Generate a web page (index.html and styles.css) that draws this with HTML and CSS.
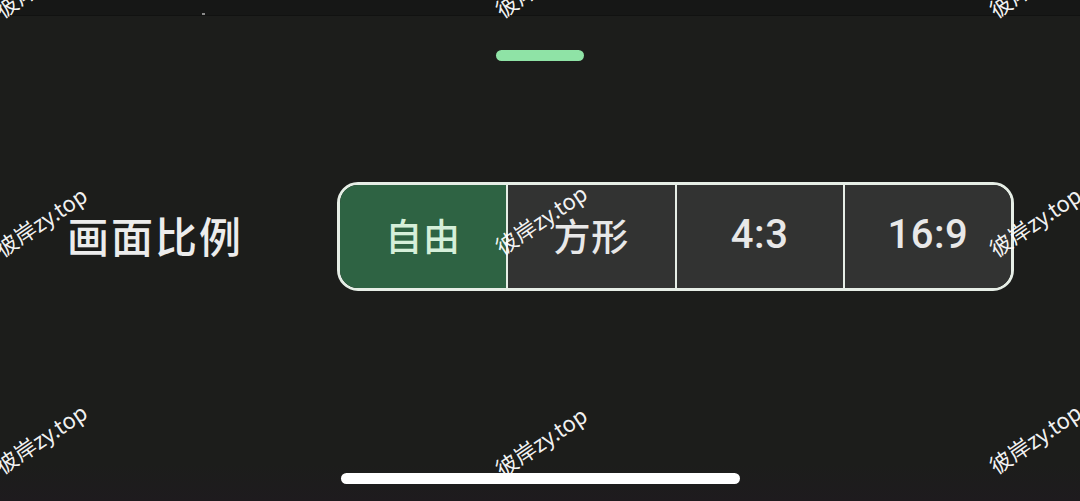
FILE: index.html
```html
<!DOCTYPE html>
<html lang="zh">
<head>
<meta charset="utf-8">
<title>画面比例</title>
<link rel="stylesheet" href="styles.css">
</head>
<body>
<div class="screen">
  <div class="status-strip"><span class="dot"></span></div>
  <div class="sheet">
    <div class="handle"></div>
    <div class="row">
      <div class="label">画面比例</div>
      <div class="segmented">
        <div class="seg selected">自由</div>
        <div class="seg">方形</div>
        <div class="seg num">4:3</div>
        <div class="seg num">16:9</div>
      </div>
    </div>
  </div>
  <div class="nav">
    <div class="home-bar"></div>
  </div>
  <div class="wm wm-a">彼岸zy.top</div>
  <div class="wm wm-b">彼岸zy.top</div>
  <div class="wm wm-c">彼岸zy.top</div>
  <div class="wm wm-d">彼岸zy.top</div>
  <div class="wm wm-e">彼岸zy.top</div>
  <div class="wm wm-f">彼岸zy.top</div>
  <div class="wm wm-g">彼岸zy.top</div>
  <div class="wm wm-h">彼岸zy.top</div>
  <div class="wm wm-i">彼岸zy.top</div>
</div>
</body>
</html>
```

FILE: styles.css
```css
* { box-sizing: border-box; }
html, body { margin: 0; padding: 0; background: #1c1d1b; }
.screen {
  position: relative;
  width: 1080px;
  height: 501px;
  overflow: hidden;
  display: flex;
  flex-direction: column;
  background: #1c1d1b;
  font-family: "Noto Sans CJK SC", "Noto Sans", sans-serif;
}
.status-strip {
  height: 16px;
  background: #161716;
  border-bottom: 1px solid #111211;
  position: relative;
}
.dot {
  position: absolute;
  left: 202px;
  top: 13px;
  width: 3px;
  height: 2px;
  background: #8a8a8a;
}
.sheet {
  display: flex;
  flex-direction: column;
  align-items: center;
  padding-top: 34px;
  height: 305px;
}
.handle {
  width: 88px;
  height: 11px;
  border-radius: 6px;
  background: #8fe3a6;
}
.row {
  margin-top: 121px;
  width: 100%;
  display: flex;
  align-items: center;
  padding-left: 67px;
}
.label {
  width: 270px;
  font-size: 42px;
  font-weight: 500;
  color: #ececec;
  letter-spacing: 2px;
  line-height: 1;
  padding-bottom: 4px;
}
.segmented {
  display: flex;
  width: 677px;
  height: 109px;
  border: 3px solid #e6eee6;
  border-radius: 21px;
  overflow: hidden;
}
.seg {
  flex: 1;
  display: flex;
  align-items: center;
  justify-content: center;
  background: #323332;
  color: #e8e8e8;
  font-size: 37px;
  font-weight: 500;
  border-left: 2px solid #e6eee6;
  padding-bottom: 4px;
  letter-spacing: 1px;
}
.seg:first-child { border-left: none; }
.seg.selected {
  background: #2e6343;
  color: #d5efd9;
}
.seg.num {
  font-family: "Roboto", "Noto Sans", sans-serif;
  font-size: 40px;
  letter-spacing: 0.5px;
}
.nav {
  flex: 1;
  display: flex;
  align-items: flex-start;
  justify-content: center;
  padding-top: 152px;
  background: linear-gradient(to bottom, #1c1d1b 0%, #1c1d1b 80%, #1e1b1e 100%);
}
.home-bar {
  width: 399px;
  height: 11px;
  border-radius: 6px;
  background: #ffffff;
}
.wm {
  position: absolute;
  font-family: "Noto Sans CJK SC", "Noto Sans", sans-serif;
  font-size: 22px;
  color: rgba(255, 255, 255, 0.95);
  white-space: nowrap;
  transform-origin: left bottom;
  transform: rotate(-34deg);
  line-height: 1;
}
.wm-a { left: 3px; top: 237px; }
.wm-b { left: 503px; top: 235px; }
.wm-c { left: 997px; top: 237px; }
.wm-d { left: 3px; top: 454px; }
.wm-e { left: 503px; top: 457px; }
.wm-f { left: 997px; top: 454px; }
.wm-g { left: 3px; top: -2px; }
.wm-h { left: 503px; top: -2px; }
.wm-i { left: 997px; top: -2px; }
```
